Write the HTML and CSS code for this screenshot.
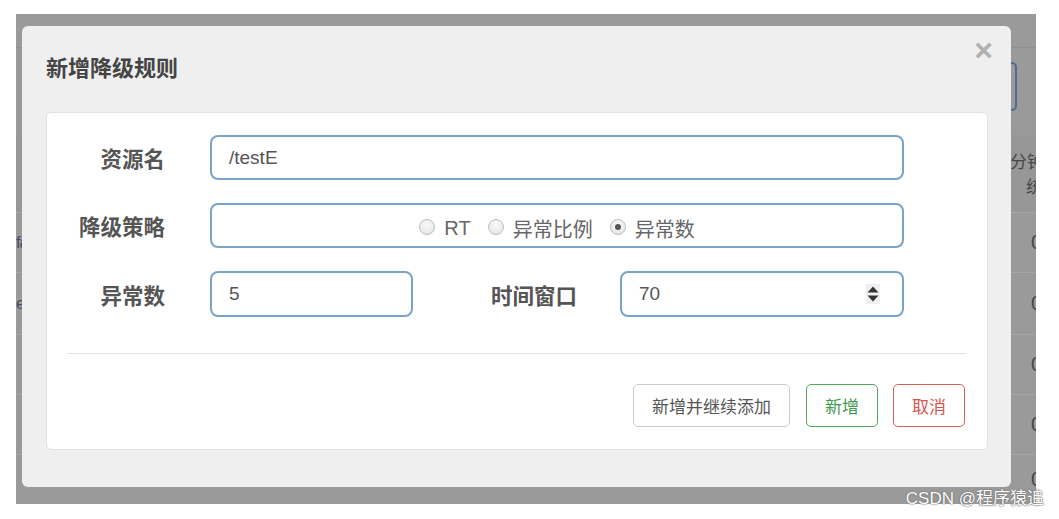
FILE: index.html
```html
<!DOCTYPE html>
<html lang="zh">
<head>
<meta charset="utf-8">
<title>新增降级规则</title>
<link rel="stylesheet" href="styles.css">
</head>
<body>
<div class="page">
  <div class="backdrop">
    <div class="bg-top"></div>
    <div class="bg-toolbar"><div class="bg-btn"></div></div>
    <div class="bg-row bg-head"><span class="bg-left"></span><span class="bg-right head-txt">分钟<br><span class="head2">统</span></span></div>
    <div class="bg-row"><span class="bg-left">fa</span><span class="bg-right">0</span></div>
    <div class="bg-row r62"><span class="bg-left">e<span class="orange">l</span></span><span class="bg-right">0</span></div>
    <div class="bg-row"><span class="bg-left"></span><span class="bg-right">0</span></div>
    <div class="bg-row"><span class="bg-left"></span><span class="bg-right">0</span></div>
    <div class="bg-row last"><span class="bg-left"></span><span class="bg-right">0</span></div>
  </div>

  <div class="modal">
    <div class="modal-header">
      <h4 class="modal-title">新增降级规则</h4>
      <span class="close">×</span>
    </div>
    <div class="panel">
      <div class="form">
        <div class="row">
          <label class="lbl">资源名</label>
          <div class="field"><span class="val">/testE</span></div>
        </div>
        <div class="row">
          <label class="lbl">降级策略</label>
          <div class="field radios">
            <span class="radio"></span><span class="rtxt">RT</span>
            <span class="radio"></span><span class="rtxt">异常比例</span>
            <span class="radio checked"></span><span class="rtxt">异常数</span>
          </div>
        </div>
        <div class="row last">
          <label class="lbl">异常数</label>
          <div class="field short"><span class="val">5</span></div>
          <label class="lbl2">时间窗口</label>
          <div class="field mid">
            <span class="val">70</span>
            <span class="spin">
              <svg width="14" height="20" viewBox="0 0 14 20"><path d="M1.5 8.5 L7 2.5 L12.5 8.5 Z" fill="#333"/><path d="M1.5 11.5 L7 17.5 L12.5 11.5 Z" fill="#333"/></svg>
            </span>
          </div>
        </div>
      </div>
      <div class="divider"></div>
      <div class="actions">
        <button class="btn btn-default">新增并继续添加</button>
        <button class="btn btn-success">新增</button>
        <button class="btn btn-danger">取消</button>
      </div>
    </div>
  </div>

  <div class="watermark">CSDN @程序猿追</div>
</div>
</body>
</html>
```
FILE: styles.css
```css
html, body {
  margin: 0;
  padding: 0;
  background: #fff;
}

.page {
  position: relative;
  width: 1059px;
  height: 519px;
  box-sizing: border-box;
  padding: 14px 23px 15px 16px;
  overflow: hidden;
  background: #fff;
  font-family: "Liberation Sans", "Noto Sans CJK SC", sans-serif;
}

/* darkened page behind the modal */
.backdrop {
  height: 490px;
  background: #9a9a9a;
  overflow: hidden;
  display: flex;
  flex-direction: column;
  color: #474747;
  font-size: 19px;
}

.bg-top {
  height: 33px;
  border-bottom: 1px solid #8f8f8f;
  flex: none;
}

.bg-toolbar {
  height: 87px;
  flex: none;
  display: flex;
  justify-content: flex-end;
  align-items: flex-start;
  padding-right: 19px;
  box-sizing: border-box;
}

.bg-btn {
  width: 120px;
  height: 49px;
  margin-top: 14px;
  border: 2px solid #4f6d8c;
  border-radius: 5px;
  box-sizing: border-box;
}

.bg-row {
  height: 60px;
  flex: none;
  display: flex;
  justify-content: space-between;
  align-items: center;
  border-bottom: 1px solid #a6a6a6;
  box-sizing: border-box;
}

.bg-row.r62 { height: 62px; }
.bg-row.last { border-bottom: none; flex: 1; }

.bg-head {
  height: 78px;
  align-items: flex-start;
  background: #979797;
}

.bg-left {
  color: #3f4f63;
  font-size: 16px;
  letter-spacing: -1px;
}

.orange { color: #b98a3c; }

.bg-right {
  width: 26px;
  padding-left: 21px;
  box-sizing: border-box;
  white-space: nowrap;
  font-size: 20px;
}

.head-txt {
  padding-left: 0;
  font-size: 17px;
  line-height: 25px;
  padding-top: 13px;
  font-family: "Noto Sans CJK SC", sans-serif;
}

.head2 { padding-left: 16px; }

/* modal */
.modal {
  position: absolute;
  left: 22px;
  top: 26px;
  width: 989px;
  height: 461px;
  box-sizing: border-box;
  padding: 0 23px 37px 24px;
  background: #efefef;
  border-radius: 6px;
  display: flex;
  flex-direction: column;
}

.modal-header {
  height: 86px;
  flex: none;
  display: flex;
  justify-content: space-between;
  align-items: flex-start;
}

.modal-title {
  margin: 25px 0 0 0;
  font-family: "Noto Sans CJK SC", sans-serif;
  font-size: 22px;
  line-height: 30px;
  font-weight: 700;
  color: #444;
}

.close {
  margin-top: 9px;
  margin-right: -5px;
  font-family: "Liberation Sans", sans-serif;
  font-size: 32px;
  line-height: 30px;
  font-weight: 700;
  color: #b1b1b1;
}

.panel {
  flex: 1;
  background: #fff;
  border: 1px solid #e2e2e2;
  border-radius: 5px;
  padding: 22px 0 22px 0;
  display: flex;
  flex-direction: column;
}

.form {
  padding-right: 83px;
}

.row {
  display: flex;
  align-items: center;
  height: 45px;
  margin-bottom: 23px;
}

.row.last {
  margin-bottom: 0;
  height: 46px;
}

.lbl, .lbl2 {
  font-family: "Noto Sans CJK SC", sans-serif;
  font-size: 21.5px;
  font-weight: 700;
  color: #555;
  text-align: right;
  flex: none;
}

.lbl {
  width: 118px;
  margin-right: 45px;
}

.lbl2 {
  width: 164px;
  margin-right: 43px;
}

.field {
  flex: 1;
  height: 100%;
  box-sizing: border-box;
  border: 2px solid #7ba3c8;
  border-radius: 8px;
  padding-left: 17px;
  display: flex;
  align-items: center;
  font-size: 19px;
  color: #555;
}

.field.short { flex: none; width: 203px; }
.field.mid {
  flex: none;
  width: 284px;
  justify-content: space-between;
  padding-right: 22px;
}

.spin {
  width: 14px;
  height: 20px;
  background: #efefef;
  display: flex;
}

.radios {
  justify-content: center;
  padding-left: 0;
  padding-top: 5px;
  color: #666;
  font-size: 20px;
}

.radio {
  width: 16px;
  height: 16px;
  box-sizing: border-box;
  border-radius: 50%;
  border: 1px solid #bdbdbd;
  background: radial-gradient(circle at 50% 35%, #fafafa 0%, #e2e2e2 100%);
  margin-right: 9px;
  position: relative;
  flex: none;
  margin-top: -3px;
}

.radio.checked::after {
  content: "";
  position: absolute;
  left: 4px;
  top: 4px;
  width: 6px;
  height: 6px;
  border-radius: 50%;
  background: #555;
}

.rtxt {
  margin-right: 17px;
  font-family: "Liberation Sans", "Noto Sans CJK SC", sans-serif;
}

.rtxt:last-child { margin-right: 0; }

.divider {
  height: 1px;
  background: #e3e3e3;
  margin: 36px 21px 0 20px;
}

.actions {
  margin-top: 30px;
  padding-right: 22px;
  display: flex;
  justify-content: flex-end;
}

.btn {
  height: 43px;
  padding: 0 18px;
  border: 1px solid #ccc;
  border-radius: 5px;
  background: #fff;
  font-family: "Noto Sans CJK SC", sans-serif;
  font-size: 17px;
  color: #555;
  margin-left: 16px;
}

.btn-default { margin-left: 0; }

.btn-success {
  border-color: #4ea860;
  color: #3f9a4f;
}

.btn-danger {
  border-color: #d9605c;
  color: #d9534f;
  margin-left: 15px;
}

.watermark {
  position: absolute;
  right: 15px;
  top: 488px;
  font-family: "Liberation Sans", "Noto Sans CJK SC", sans-serif;
  font-size: 17px;
  line-height: 22px;
  color: #fff;
  text-shadow: 0 0 1px #6a6a6a, 0 0 1px #6a6a6a, 0 0 2px #888;
}
```
